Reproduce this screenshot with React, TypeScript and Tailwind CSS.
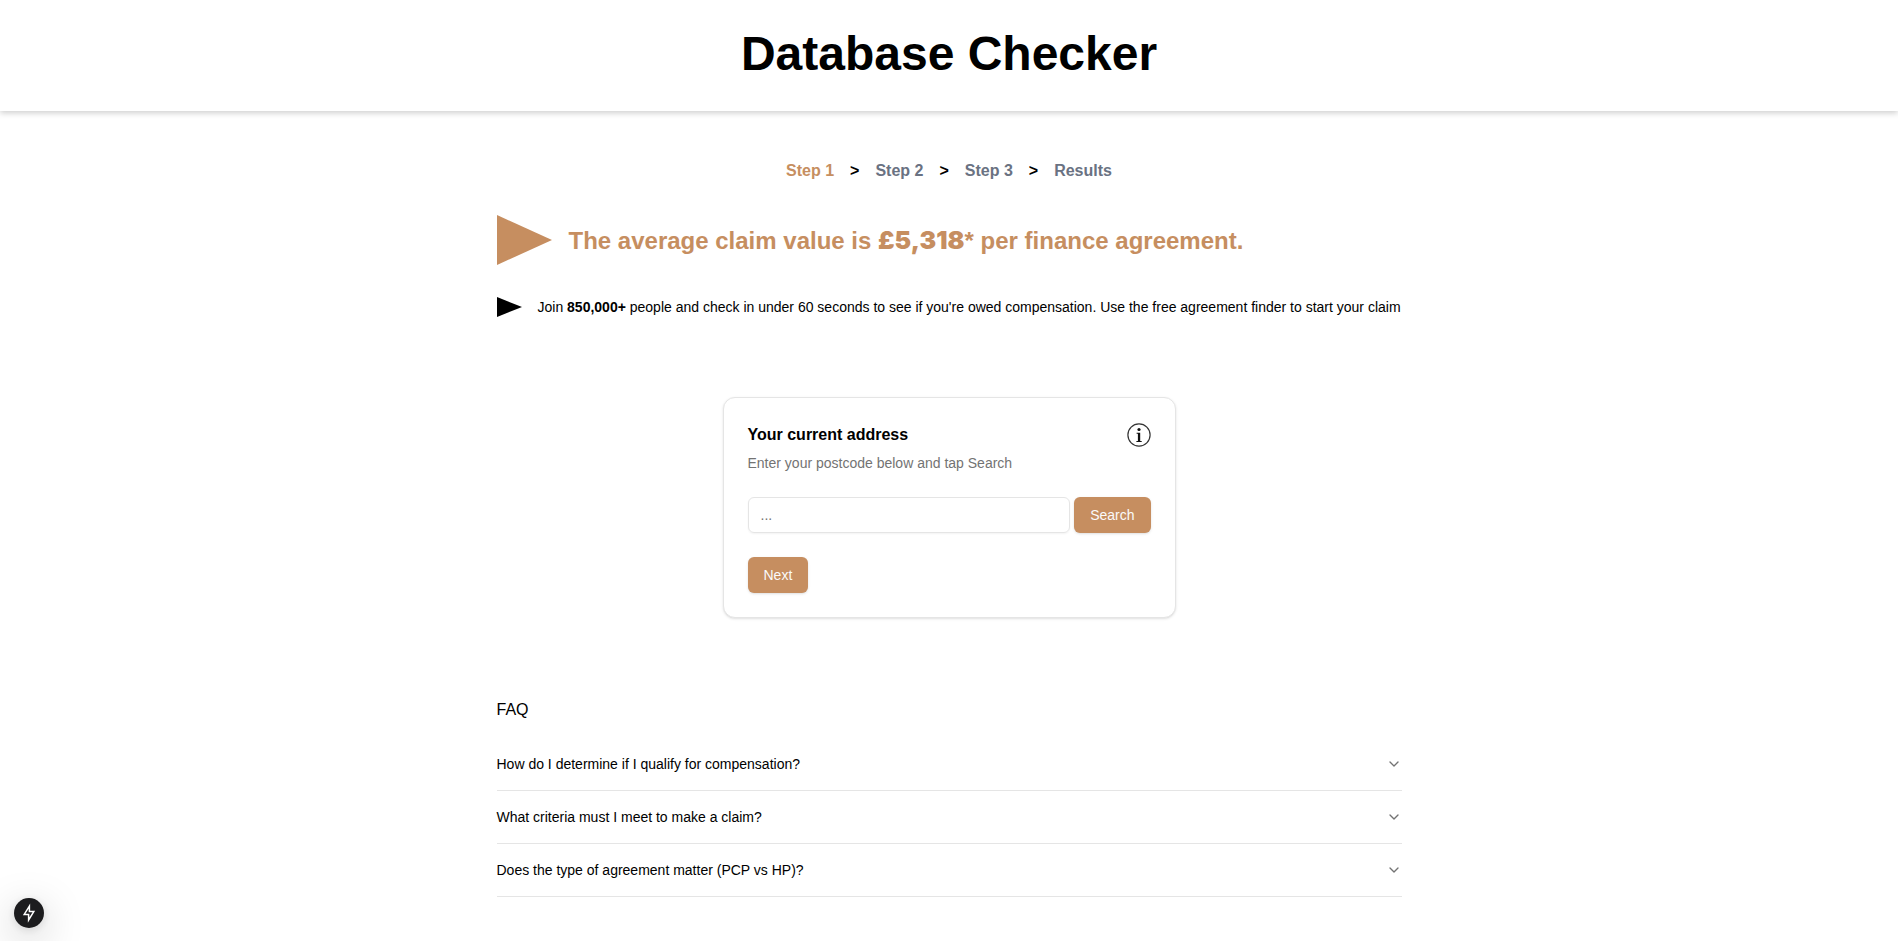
import { ChevronDown } from "lucide-react";
import { Fragment, useState } from "react";

const steps = ["Step 1", "Step 2", "Step 3", "Results"];

const faqs = [
  {
    question: "How do I determine if I qualify for compensation?",
    answer: "Search your address to see the finance agreements held in your name.",
  },
  {
    question: "What criteria must I meet to make a claim?",
    answer: "You must have held a motor finance agreement in your own name.",
  },
  {
    question: "Does the type of agreement matter (PCP vs HP)?",
    answer: "Both PCP and HP agreements can be checked.",
  },
];

function Header() {
  return (
    <header className="flex justify-center bg-white px-4 pt-6 pb-7 shadow-[0_2px_6px_rgba(0,0,0,0.2)]">
      <h1 className="text-center text-5xl leading-[59px] font-bold">Database Checker</h1>
    </header>
  );
}

function Steps() {
  return (
    <nav aria-label="Progress" className="flex flex-wrap justify-center gap-4 font-bold">
      {steps.map((step, i) => (
        <Fragment key={step}>
          {i > 0 && <span>&gt;</span>}
          <span className={i === 0 ? "text-[#c68e60]" : "text-gray-500"}>{step}</span>
        </Fragment>
      ))}
    </nav>
  );
}

function Intro() {
  return (
    <section>
      <div className="mt-8 flex items-center gap-[17px]">
        <svg className="h-[50px] w-[55px] shrink-0 fill-[#c68e60]" viewBox="0 0 55 50" aria-hidden="true">
          <path d="M0 0L55 25L0 50Z" />
        </svg>
        <h2 className="pt-0.5 text-2xl font-bold text-[#c68e60]">
          The average claim value is{" "}
          <span className="font-[Inter,sans-serif] text-[25px] leading-none font-black">£5,318</span>* per finance
          agreement.
        </h2>
      </div>
      <div className="mt-8 flex items-center gap-4">
        <svg className="h-5 w-[25px] shrink-0" viewBox="0 0 25 20" aria-hidden="true">
          <path d="M0 0L25 10L0 20Z" />
        </svg>
        <p className="text-sm">
          Join <b>850,000+</b> people and check in under 60 seconds to see if you're owed compensation. Use the free
          agreement finder to start your claim
        </p>
      </div>
    </section>
  );
}

function InfoIcon() {
  return (
    <svg className="size-6" viewBox="0 0 24 24" fill="none" aria-hidden="true">
      <circle cx="12" cy="12" r="11.1" stroke="#333" strokeWidth="1.2" />
      <circle cx="12" cy="6.5" r="1.6" fill="#111" />
      <path d="M9.6 9.8H13.2V17.9H14.7V18.9H9.4V17.9H10.9V10.8H9.6Z" fill="#111" />
    </svg>
  );
}

function AddressCard() {
  const button = "h-9 rounded-md bg-[#c68e60] px-4 text-sm text-neutral-50 shadow-sm";
  return (
    <form
      className="mx-auto mt-20 w-full max-w-[453px] rounded-xl border border-neutral-200 bg-white p-6 shadow-sm"
      onSubmit={(e) => e.preventDefault()}
    >
      <div className="flex h-[25px] items-center justify-between">
        <label htmlFor="postcode" className="font-bold">
          Your current address
        </label>
        <button type="button" aria-label="Information">
          <InfoIcon />
        </button>
      </div>
      <p className="mt-1.5 text-sm text-neutral-500">Enter your postcode below and tap Search</p>
      <div className="mt-6 flex gap-1">
        <input
          id="postcode"
          placeholder="..."
          className="h-9 min-w-0 flex-1 rounded-md border border-neutral-200 px-3 text-sm shadow-xs placeholder:text-neutral-500"
        />
        <button type="button" className={button}>
          Search
        </button>
      </div>
      <div className="mt-6 flex">
        <button type="submit" className={button}>
          Next
        </button>
      </div>
    </form>
  );
}

function Faq() {
  const [open, setOpen] = useState<number | null>(null);
  return (
    <section className="mt-20">
      <h2>FAQ</h2>
      <div className="mt-4">
        {faqs.map(({ question, answer }, i) => (
          <div key={question} className="border-b border-neutral-200">
            <button
              type="button"
              aria-expanded={open === i}
              onClick={() => setOpen(open === i ? null : i)}
              className="flex w-full items-center justify-between py-4 text-left text-sm"
            >
              {question}
              <ChevronDown className="size-4 text-neutral-500" />
            </button>
            {open === i && <p className="pb-4 text-sm">{answer}</p>}
          </div>
        ))}
      </div>
    </section>
  );
}

function DevBadge() {
  return (
    <button
      type="button"
      aria-label="Static route"
      className="fixed bottom-[13px] left-3.5 flex size-[30px] items-center justify-center rounded-full bg-[#1c1c1e] shadow-[0_11px_40px_rgba(0,0,0,0.25),0_2px_10px_rgba(0,0,0,0.12)]"
    >
      <svg className="size-5" viewBox="0 0 20 20" fill="none" stroke="white" strokeWidth="1.5" aria-hidden="true">
        <path d="M10.4 3.2L5.2 11.4H9.6V17L14.8 8.6H10.4Z" />
      </svg>
    </button>
  );
}

export default function App() {
  return (
    <div className="font-['Liberation_Sans',Arial,sans-serif] text-black">
      <Header />
      <main className="mx-auto w-full max-w-[905px] pt-12">
        <Steps />
        <Intro />
        <AddressCard />
        <Faq />
      </main>
      <DevBadge />
    </div>
  );
}
